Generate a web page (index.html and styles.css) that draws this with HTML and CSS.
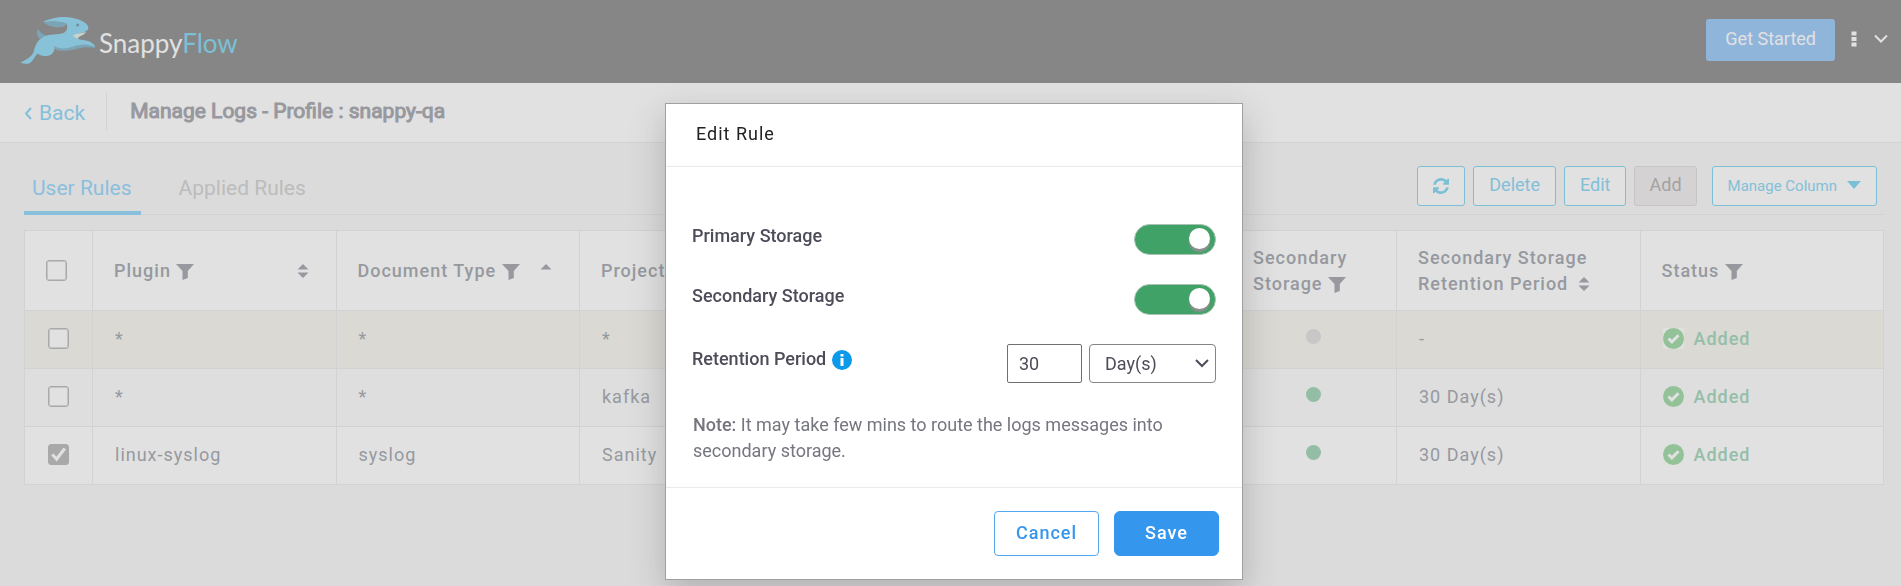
FILE: index.html
```html
<!DOCTYPE html>
<html lang="en">
<head>
<meta charset="utf-8">
<meta name="viewport" content="width=device-width, initial-scale=1">
<title>SnappyFlow - Manage Logs</title>
<link rel="stylesheet" href="styles.css">
</head>
<body>
<svg class="sprite" aria-hidden="true">
  <symbol id="filter" viewBox="0 0 18 16"><path d="M0 0h18l-6.200 7v7L6.500 16V7z"/></symbol>
  <symbol id="sort" viewBox="0 0 12 16"><path d="M6 1l5.500 5.500H.5zM.5 9.500h11L6 15z"/></symbol>
  <symbol id="sort-up" viewBox="0 0 12 16"><path d="M6 1l5.500 5.500H.5z"/></symbol>
  <symbol id="added" viewBox="0 0 21 21"><circle cx="10.500" cy="10.500" r="10.500"/><path class="tick" d="M5.500 10.500l3.400 3.400 6.600-6.600"/></symbol>
</svg>

<header class="topbar">
  <a class="brand" href="#">
    <svg class="rabbit" viewBox="63 48 228 147" aria-hidden="true">
      <path class="rabbit-shade" d="M118 88C111 95 113 108 122 116L142 106C131 104 123 98 118 88ZM165 146C185 157 212 152 232 147C255 140 272 141 288 144L287 134L170 136ZM112 160C125 171 145 172 158 160C145 166 128 166 117 156ZM88 191C100 188 106 172 114 163L106 160Z"/>
      <path class="rabbit-body" d="M132 67C150 54 190 48 218 53C245 58 268 69 268 84C268 94 250 100 221 104C226 112 236 118 250 120C268 122 284 128 288 140C265 132 245 134 230 137C212 143 190 151 166 139C168 155 160 168 140 168C130 168 122 164 116 160C106 168 101 190 86 191C76 192 68 191 65 187C80 180 95 172 103 158C108 140 113 118 138 108C160 101 185 104 195 98C204 92 207 82 203 71C185 64 155 62 132 67Z"/>
      <path class="rabbit-shade" d="M134 69C155 62 185 64 203 71C201 80 185 83 168 81C155 80 145 76 134 69Z"/>
      <path class="rabbit-mouth" d="M221 104L261 96C254 108 240 106 236 117C229 114 224 110 221 104Z"/>
      <circle class="rabbit-eye" cx="236" cy="75" r="4.500"/>
    </svg>
    <span class="brand-name">Snappy<span class="brand-accent">Flow</span></span>
  </a>
  <div class="topbar-actions">
    <button class="get-started" type="button">Get Started</button>
    <button class="icon-button" type="button" aria-label="More"><svg width="6" height="16" viewBox="0 0 6 16"><path d="M.5.5h5v4h-5zM.5 6h5v4h-5zM.5 11.500h5v4h-5z"/></svg></button>
    <button class="icon-button" type="button" aria-label="Account"><svg width="16" height="16" viewBox="0 0 16 16"><path class="line" d="M2 4.500l6 6 6-6"/></svg></button>
  </div>
</header>

<div class="titlebar">
  <a class="back" href="#"><svg width="8" height="14" viewBox="0 0 8 14" aria-hidden="true"><path class="line" d="M7 2L2 7.500 7 13"/></svg>Back</a>
  <h1 class="title">Manage Logs - Profile : snappy-qa</h1>
</div>

<main class="content">
  <div class="toolbar">
    <nav class="tabs">
      <a class="tab tab-active" href="#">User Rules</a>
      <a class="tab" href="#">Applied Rules</a>
    </nav>
    <div class="actions">
      <button class="btn btn-refresh" type="button" aria-label="Refresh"><svg width="16" height="16" viewBox="0 0 1536 1536"><path transform="translate(0 -128)" d="M1511 1056q0 5-1 7-64 268-268 434.500T764 1664q-146 0-282.500-55T238 1452l-129 129q-19 19-45 19t-45-19-19-45v-448q0-26 19-45t45-19h448q26 0 45 19t19 45-19 45l-137 137q71 66 161 102t187 36q134 0 250-65t186-179q11-17 53-117 8-23 30-23h192q13 0 22.500 9.500t9.500 22.500zm25-800v448q0 26-19 45t-45 19h-448q-26 0-45-19t-19-45 19-45l138-138Q969 384 768 384q-134 0-250 65T332 628q-11 17-53 117-8 23-30 23H50q-13 0-22.500-9.500T18 736v-7q65-268 270-434.500T768 128q146 0 284 55.500T1297 340l130-129q19-19 45-19t45 19 19 45z"/></svg></button>
      <button class="btn" type="button">Delete</button>
      <button class="btn" type="button">Edit</button>
      <button class="btn btn-add" type="button" disabled>Add</button>
      <button class="btn btn-columns" type="button">Manage Column<svg width="14" height="8" viewBox="0 0 14 8" aria-hidden="true"><path d="M0 0h14L7 8z"/></svg></button>
    </div>
  </div>

  <table class="rules">
    <colgroup>
      <col class="col-check"><col><col><col><col><col class="col-flag"><col class="col-flag"><col><col>
    </colgroup>
    <thead>
      <tr>
        <th><input class="check" type="checkbox" aria-label="Select all"></th>
        <th><div class="head"><span>Plugin <svg class="filter"><use href="#filter"/></svg></span><svg class="sort"><use href="#sort"/></svg></div></th>
        <th><div class="head"><span>Document Type <svg class="filter"><use href="#filter"/></svg></span><svg class="sort"><use href="#sort-up"/></svg></div></th>
        <th>Project</th>
        <th></th>
        <th></th>
        <th>Secondary Storage <svg class="filter"><use href="#filter"/></svg></th>
        <th>Secondary Storage Retention Period <svg class="sort"><use href="#sort"/></svg></th>
        <th>Status <svg class="filter"><use href="#filter"/></svg></th>
      </tr>
    </thead>
    <tbody>
      <tr class="highlight">
        <td><input class="check" type="checkbox" aria-label="Select rule 1"></td>
        <td>*</td><td>*</td><td>*</td><td></td><td></td>
        <td class="flag"><span class="dot"></span></td>
        <td>-</td>
        <td><span class="status"><svg><use href="#added"/></svg>Added</span></td>
      </tr>
      <tr class="alternate">
        <td><input class="check" type="checkbox" aria-label="Select rule 2"></td>
        <td>*</td><td>*</td><td>kafka</td><td></td><td></td>
        <td class="flag"><span class="dot dot-on"></span></td>
        <td>30 Day(s)</td>
        <td><span class="status"><svg><use href="#added"/></svg>Added</span></td>
      </tr>
      <tr>
        <td><input class="check" type="checkbox" aria-label="Select rule 3" checked></td>
        <td>linux-syslog</td><td>syslog</td><td>Sanity</td><td></td><td></td>
        <td class="flag"><span class="dot dot-on"></span></td>
        <td>30 Day(s)</td>
        <td><span class="status"><svg><use href="#added"/></svg>Added</span></td>
      </tr>
    </tbody>
  </table>
</main>

<div class="overlay">
  <form class="modal" role="dialog" aria-labelledby="modal-title">
    <h2 class="modal-title" id="modal-title">Edit Rule</h2>
    <div class="modal-body">
      <div class="field">
        <label for="primary">Primary Storage</label>
        <input class="switch" id="primary" type="checkbox" role="switch" checked>
      </div>
      <div class="field">
        <label for="secondary">Secondary Storage</label>
        <input class="switch" id="secondary" type="checkbox" role="switch" checked>
      </div>
      <div class="field">
        <label class="period-label" for="period">Retention Period <svg class="info" viewBox="0 0 20 20" aria-hidden="true"><circle cx="10" cy="10" r="10"/><path d="M8.500 4h3v2.500h-3zM8.500 8h3v8h-3z"/></svg></label>
        <div class="period">
          <input class="amount" id="period" type="text" value="30">
          <div class="unit-box">
            <select class="unit" aria-label="Retention unit"><option>Day(s)</option></select>
            <svg class="unit-arrow" viewBox="0 0 14 9" aria-hidden="true"><path class="line" d="M1 1l6 6 6-6"/></svg>
          </div>
        </div>
      </div>
      <p class="note"><strong>Note:</strong> It may take few mins to route the logs messages into secondary storage.</p>
    </div>
    <div class="modal-footer">
      <button class="modal-button" type="button">Cancel</button>
      <button class="modal-button modal-save" type="button">Save</button>
    </div>
  </form>
</div>
</body>
</html>
```
FILE: styles.css
```css
* {
  box-sizing: border-box;
}

body {
  margin: 0;
  background: #dbdbdb;
  color: #96999f;
  font: 18px/26px Roboto, "Liberation Sans", sans-serif;
}

a {
  color: inherit;
  text-decoration: none;
}

button,
input,
select {
  font: inherit;
  color: inherit;
}

.sprite {
  position: absolute;
  width: 0;
  height: 0;
}

.line {
  fill: none;
  stroke: currentColor;
  stroke-width: 2;
}

/* Top bar */
.topbar {
  display: flex;
  justify-content: space-between;
  height: 83px;
  padding: 16px 12px 0 20px;
  background: #868686;
}

.brand {
  display: flex;
  align-items: flex-start;
  gap: 3px;
}

.rabbit {
  width: 76px;
  height: 49px;
}

.rabbit-body {
  fill: #88c2d8;
}

.rabbit-shade {
  fill: #7ba5b5;
}

.rabbit-mouth {
  fill: #c6d4cd;
}

.rabbit-eye {
  fill: #7090a0;
}

.brand-name {
  padding-top: 10px;
  color: #e1e1e1;
  font: 26px/34px Lato, sans-serif;
}

.brand-accent {
  color: #7bc0d6;
}

.topbar-actions {
  display: flex;
  align-items: flex-start;
  gap: 16px;
  padding-top: 3px;
}

.get-started {
  height: 42px;
  padding: 0 19px 3px;
  border: 0;
  border-radius: 3px;
  background: #90b5da;
  color: #e1e1e1;
}

.icon-button {
  display: flex;
  align-items: center;
  height: 40px;
  padding: 0;
  border: 0;
  background: none;
  color: #e1e1e1;
  fill: currentColor;
}

/* Title bar */
.titlebar {
  display: flex;
  align-items: flex-start;
  height: 60px;
  padding: 9px 24px 0;
  border-bottom: 1px solid #d2d2d2;
  background: #e1e1e1;
}

.back {
  display: flex;
  align-items: center;
  gap: 7px;
  height: 38px;
  padding: 4px 21px 0 0;
  border-right: 1px solid #d2d2d2;
  color: #84bfd9;
  font-size: 21px;
}

.title {
  margin: 0 0 0 23px;
  color: #98989f;
  font-size: 21px;
  font-weight: 400;
  line-height: 38px;
  -webkit-text-stroke: 1px currentColor;
}

/* Tabs and actions */
.content {
  padding: 0 17px 0 24px;
}

.toolbar {
  display: flex;
  justify-content: space-between;
  height: 72px;
  margin-bottom: 15px;
  border-bottom: 1px solid #d2d2d2;
}

.tabs {
  display: flex;
  gap: 30px;
}

.tab {
  height: 72px;
  padding: 32px 9px 0 8px;
  color: #bcbcbc;
  font-size: 21px;
}

.tab-active {
  border-bottom: 4px solid #88bfdb;
  color: #8bbfde;
}

.actions {
  display: flex;
  gap: 8px;
  padding: 23px 7px 0 0;
}

.btn {
  height: 40px;
  padding: 0 15px 3px;
  border: 1px solid #7bc0d6;
  border-radius: 3px;
  background: #e1e1e1;
  color: #82c0d8;
}

.btn svg {
  fill: #7bc0d6;
}

.btn-refresh {
  padding: 3px 15px 0;
}

.btn-add {
  padding: 0 14px 3px;
  border-color: #c8c4c6;
  background: #d5d2d3;
  color: #a2a2a2;
}

.btn-columns {
  display: flex;
  align-items: center;
  gap: 10px;
  margin-left: 7px;
  padding-bottom: 0;
  font-size: 15px;
}

.btn-columns svg {
  margin-bottom: 3px;
}

/* Rules table */
.rules {
  width: 100%;
  border-collapse: collapse;
  table-layout: fixed;
  background: #e1e1e1;
  letter-spacing: 1px;
}

.col-check {
  width: 68px;
}

.col-flag {
  width: 165px;
}

.rules th,
.rules td {
  height: 58px;
  padding: 0 21px;
  border: 1px solid #d2d2d2;
  text-align: left;
}

.rules th {
  height: 80px;
  font-weight: 500;
}

.rules td {
  padding: 0 22px 2px;
}

.rules td:first-child {
  padding-left: 23px;
}

.rules .flag {
  padding: 0 2px 4px 0;
  text-align: center;
}

.highlight {
  background: #dad9d3;
}

.alternate {
  background: #dedede;
}

.head {
  display: flex;
  align-items: center;
  justify-content: space-between;
  padding-right: 6px;
}

.filter {
  width: 18px;
  height: 16px;
  vertical-align: -3px;
  fill: #98989f;
}

.sort {
  width: 12px;
  height: 16px;
  margin-left: 4px;
  vertical-align: -2px;
  fill: #96999f;
}

.check {
  display: flex;
  align-items: center;
  justify-content: center;
  width: 21px;
  height: 21px;
  margin: 0;
  appearance: none;
  border: 1px solid #a9a9a9;
  border-radius: 3px;
  background: #e1e1e1;
  box-shadow: inset 0 0 0 1px #c4c4c4;
}

.check:checked {
  background: #a9a9a9;
  box-shadow: none;
}

.check:checked::before {
  content: "";
  width: 15px;
  height: 14px;
  background: #e1e1e1;
  clip-path: polygon(0 56%, 17% 42%, 36% 66%, 84% 0, 100% 14%, 38% 100%);
}

.dot {
  display: inline-block;
  width: 15px;
  height: 15px;
  border-radius: 50%;
  background: #c7c7c7;
}

.dot-on {
  background: #94bda6;
}

.status {
  display: flex;
  align-items: center;
  gap: 10px;
  color: #95bea9;
  font-weight: 500;
}

.status svg {
  width: 21px;
  height: 21px;
  background: #e0e0df;
  fill: #93c299;
}

.alternate .status svg {
  background: none;
}

.tick {
  fill: none;
  stroke: #e1e1e1;
  stroke-width: 3;
}

/* Edit rule dialog */
.overlay {
  position: fixed;
  inset: 0;
  display: flex;
  align-items: flex-start;
  justify-content: center;
  padding: 103px 0 0 7px;
}

.modal {
  width: 578px;
  border: 1px solid #a0a0a0;
  background: #fff;
  box-shadow: 0 12px 32px rgba(60, 50, 55, 0.25);
  color: #4d4d5a;
}

.modal-title {
  margin: 0;
  padding: 17px 30px 19px;
  border-bottom: 1px solid #ebebeb;
  color: #222;
  font-size: 18px;
  font-weight: 400;
  letter-spacing: 1px;
}

.modal-body {
  display: grid;
  gap: 29px;
  padding: 57px 26px 23px;
}

.field {
  display: flex;
  align-items: flex-start;
  justify-content: space-between;
  font-weight: 500;
  line-height: 24px;
}

.period-label {
  padding-top: 3px;
}

.info {
  width: 20px;
  height: 20px;
  margin-left: 1px;
  vertical-align: -5px;
  fill: #0d99ea;
}

.info path {
  fill: #fff;
}

.switch {
  display: flex;
  align-items: flex-start;
  justify-content: flex-end;
  width: 82px;
  height: 31px;
  margin: 0;
  padding: 3px 5px;
  appearance: none;
  border: 1px solid #a9c4b4;
  border-radius: 16px;
  background: #41a267;
}

.switch::before {
  content: "";
  width: 21px;
  height: 21px;
  border-radius: 50%;
  background: #fff;
  box-shadow: 0 3px 2px #8f8f8f;
}

.period {
  display: flex;
  gap: 7px;
  font-weight: 400;
}

.amount {
  width: 75px;
  height: 39px;
  padding: 0 11px;
  border: 1px solid #6f6f6f;
  border-radius: 2px;
  background: #fff;
}

.unit-box {
  position: relative;
}

.unit {
  width: 127px;
  height: 39px;
  padding: 0 15px;
  appearance: none;
  border: 1px solid #858585;
  border-radius: 4px;
  background: #fff;
}

.unit-arrow {
  position: absolute;
  top: 15px;
  right: 7px;
  width: 14px;
  height: 9px;
  pointer-events: none;
}

.note {
  margin: 0;
  padding: 0 24px 0 1px;
  color: #75767f;
}

.note strong {
  font-weight: 500;
}

.modal-footer {
  display: flex;
  justify-content: flex-end;
  gap: 15px;
  padding: 23px 23px;
  border-top: 1px solid #ebebeb;
}

.modal-button {
  width: 105px;
  height: 45px;
  padding: 0 0 2px;
  border: 1px solid #55a7f0;
  border-radius: 4px;
  background: #fff;
  color: #3596ed;
  font-weight: 500;
  letter-spacing: 1px;
}

.modal-save {
  border-color: #3596ed;
  border-radius: 6px;
  background: #3596ed;
  color: #fff;
}
```
